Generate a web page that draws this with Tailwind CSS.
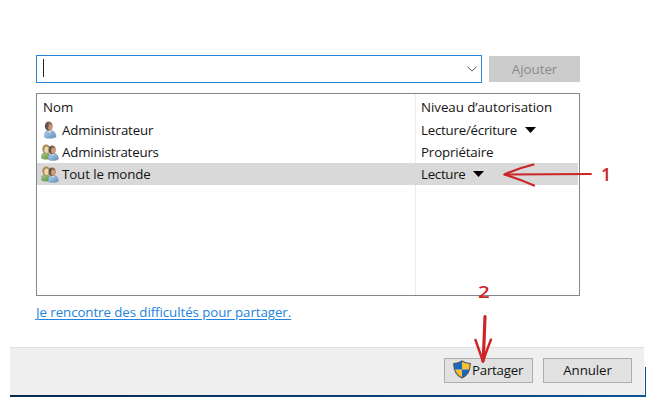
<!DOCTYPE html>
<html lang="fr">
<head>
<meta charset="utf-8">
<title>Partage de fichiers</title>
<script src="https://cdn.jsdelivr.net/npm/@tailwindcss/browser@4"></script>
</head>
<body class="relative flex h-[407px] w-[656px] flex-col overflow-hidden bg-white font-['Open_Sans','Noto_Sans',sans-serif] text-[13.3px] leading-[22px] text-[#141414]">
<svg class="absolute size-0" aria-hidden="true">
  <defs>
    <linearGradient id="blue" x1="0" y1="0" x2="1" y2="1"><stop stop-color="#b4d3ec"/><stop offset="1" stop-color="#5f8fbd"/></linearGradient>
    <linearGradient id="green" x1="0" y1="0" x2="1" y2="1"><stop stop-color="#a9cd8b"/><stop offset="1" stop-color="#5c913f"/></linearGradient>
    <linearGradient id="hair" x1="0" y1="0" x2="1" y2="0"><stop stop-color="#4b4642"/><stop offset="1" stop-color="#b08264"/></linearGradient>
    <symbol id="user" viewBox="0 0 16 18">
      <path d="M2.500 16.200c-.3-3.400.3-5.700 3-6.900l3.800-.2c2.700.8 4.900 3.400 4.800 6.700-2.500 1.700-9 2.300-11.600.4z" fill="url(#blue)" stroke="#7c9dbc" stroke-width=".5"/>
      <path d="M5.500 9.300l2.300 3 2-3.400z" fill="#e7edf2"/>
      <ellipse cx="6.800" cy="5.200" rx="3.900" ry="4.800" fill="url(#hair)"/>
      <path d="M7.200 3.300c2 .2 3.300 1.300 3 3.400-.3 1.800-1.300 2.800-2.500 2.700-1.300-.2-2-2-.5-6.100z" fill="#c89472"/>
    </symbol>
    <symbol id="users" viewBox="0 0 18 17">
      <path d="M.5 14.200c-.2-3 .5-5 2.700-5.700l3.500.2c2 .8 2.800 2.800 2.500 5.500-2 1.300-7 1.300-8.700 0z" fill="url(#green)" stroke="#6f9858" stroke-width=".5"/>
      <ellipse cx="5.200" cy="5" rx="3.900" ry="4.500" fill="#a98b52"/>
      <ellipse cx="5.600" cy="5.800" rx="2.300" ry="3.200" fill="#f1d5b3"/>
      <path d="M7.300 15.500c-.2-3.200.4-5.400 2.800-6.100l3.300-.1c2.700.7 4.200 2.900 4 5.900-2.100 1.700-8 1.900-10.100.3z" fill="url(#blue)" stroke="#7c9dbc" stroke-width=".5"/>
      <path d="M10 9.500l1.800 2.300 1.700-2.500z" fill="#e7edf2"/>
      <ellipse cx="11.200" cy="5.800" rx="3.600" ry="4.400" fill="url(#hair)"/>
      <ellipse cx="12.100" cy="6.700" rx="2" ry="2.900" fill="#cf9c78"/>
    </symbol>
  </defs>
</svg>

<main class="flex h-[347px] flex-col pt-[55px] pl-9">
  <div class="flex items-center gap-[7px]">
    <div class="flex h-7 w-[446px] items-center justify-between border border-[#2a86d2] pr-1 pl-[6px]">
      <span class="-mt-0.5 h-[18px] w-px bg-[#222]"></span>
      <svg class="h-[6px] w-[10px]" viewBox="0 0 10 6" fill="none" stroke="#555" stroke-width="1"><path d="M.6.8 5 5.100 9.400.8"/></svg>
    </div>
    <button class="h-[26px] w-[91px] bg-[#cccccc] text-[#8b8b8b]">Ajouter</button>
  </div>

  <section class="mt-2.5 flex h-[203px] w-[544px] flex-col border border-[#84868f]">
    <div class="flex h-full flex-col bg-[linear-gradient(#ececf0,#ececf0)] bg-[length:1px_100%] bg-[position:378px_0] bg-no-repeat pt-[2px]">
      <div class="flex h-[23px] items-start"><span class="w-[384px] pl-1.5">Nom</span><span class="tracking-[-0.04px]">Niveau d’autorisation</span></div>
      <div class="flex h-[22px] items-center">
        <div class="flex w-[384px] items-center pl-[5px]"><svg class="mr-1 h-[18px] w-4"><use href="#user"/></svg><span class="tracking-[-0.15px]">Administrateur</span></div>
        <span class="tracking-[-0.24px]">Lecture/écriture</span><svg class="ml-2 h-[6px] w-[11px]" viewBox="0 0 11 6"><path d="M0 0h11L5.500 6z"/></svg>
      </div>
      <div class="flex h-[22px] items-center">
        <div class="flex w-[384px] items-center pl-1"><svg class="mr-[3px] h-[17px] w-[18px]"><use href="#users"/></svg><span class="tracking-[-0.2px]">Administrateurs</span></div>
        <span class="tracking-[-0.15px]">Propriétaire</span>
      </div>
      <div class="mr-px flex h-[22px] items-center bg-[#d9d9d9]">
        <div class="flex w-[384px] items-center pl-1"><svg class="mr-[3px] h-[17px] w-[18px]"><use href="#users"/></svg><span class="tracking-[-0.1px]">Tout le monde</span></div>
        <span class="tracking-[-0.3px]">Lecture</span><svg class="ml-2 h-[6px] w-[11px]" viewBox="0 0 11 6"><path d="M0 0h11L5.500 6z"/></svg>
      </div>
    </div>
  </section>
  <a class="mt-[5px] self-start tracking-[-0.07px] text-[#2383dc] underline underline-offset-2">Je rencontre des difficultés pour partager.</a>
</main>

<footer class="ml-2.5 flex h-[48px] w-[634px] items-start justify-end gap-2.5 border-t border-[#dfdfdf] bg-[#efefef] pt-2.5 pr-3">
  <button class="flex h-[25px] w-[89px] items-center border border-[#adadad] bg-[#e1e1e1] pl-2">
    <svg class="mr-px h-[19px] w-[18px] shrink-0 -translate-y-px" viewBox="0 0 18 19">
      <clipPath id="shield"><path d="M9 1c2.500 1.800 5 2.400 8.200 2.500C17.400 10.500 14.700 15.300 9 18 3.300 15.300.6 10.500.8 3.500 4 3.400 6.500 2.800 9 1z"/></clipPath>
      <g clip-path="url(#shield)"><path fill="#fcc02f" d="M9 0h9v9.500H9zM0 9.500h9V19H0z"/><path fill="#1669bd" d="M0 0h9v9.500H0zM9 9.500h9V19H9z"/></g>
      <path d="M9 1c2.500 1.800 5 2.400 8.200 2.500C17.400 10.500 14.700 15.300 9 18 3.300 15.300.6 10.500.8 3.500 4 3.400 6.500 2.800 9 1z" fill="none" stroke="#4c5457" stroke-width="1.100"/>
    </svg>
    <span class="-mt-px tracking-[-0.25px]">Partager</span>
  </button>
  <button class="h-[25px] w-[89px] border border-[#adadad] bg-[#e1e1e1]"><span class="relative -top-px tracking-[-0.1px]">Annuler</span></button>
</footer>
<div class="ml-2.5 h-[2px] w-[636px] bg-linear-to-r from-[#06284f] to-[#0d5497]"></div>
<div class="absolute top-[367px] left-[645px] h-[30px] w-px bg-[#0d4f91]"></div>

<svg class="absolute inset-0 h-[407px] w-[656px]" viewBox="0 0 656 407" fill="none" stroke="#cb2528" stroke-linecap="round" stroke-linejoin="round">
  <path stroke-width="2" d="M591 174 504.500 174.500"/>
  <path stroke-width="2.200" d="M533.500 164.500C523 167 513 170.500 504.500 174.500 514 177.500 524 181 534 185.500"/>
  <path stroke-width="3.200" d="M485 316.500C484.500 331 484 346 483 361"/>
  <path stroke-width="2.400" d="M475.500 340 483 361.500C485.500 354 488 347 491 339.500"/>
</svg>
<span class="absolute top-[163px] left-[601px] font-['Open_Sans'] text-[18px] font-semibold text-[#cb2528]">1</span>
<span class="absolute top-[281px] left-[478px] origin-left scale-x-[1.2] font-['Open_Sans'] text-[17px] font-semibold text-[#cb2528]">2</span>
</body>
</html>
